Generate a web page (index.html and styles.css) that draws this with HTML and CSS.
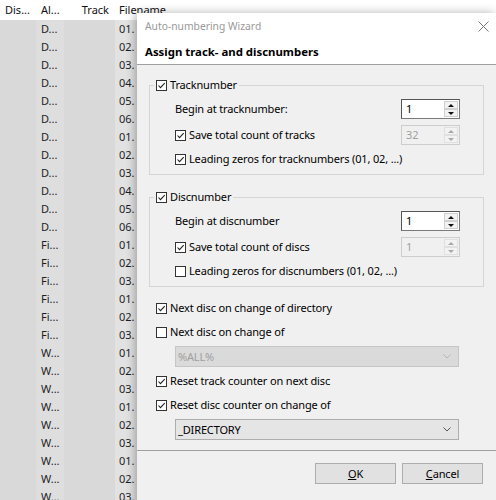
FILE: index.html
```html
<!DOCTYPE html>
<html lang="en">
<head>
    <meta charset="UTF-8">
    <meta name="viewport" content="width=device-width, initial-scale=1.0">
    <title>Auto-numbering Wizard</title>
    <link rel="stylesheet" href="styles.css">
</head>
<body>
    <div class="list">
        <div class="list-head">
            <span>Dis...</span>
            <span>Al...</span>
            <span class="num">Track</span>
            <span>Filename</span>
        </div>
        <div class="list-row"><span></span><span>D...</span><span></span><span>01.</span></div>
        <div class="list-row"><span></span><span>D...</span><span></span><span>02.</span></div>
        <div class="list-row"><span></span><span>D...</span><span></span><span>03.</span></div>
        <div class="list-row"><span></span><span>D...</span><span></span><span>04.</span></div>
        <div class="list-row"><span></span><span>D...</span><span></span><span>05.</span></div>
        <div class="list-row"><span></span><span>D...</span><span></span><span>06.</span></div>
        <div class="list-row"><span></span><span>D...</span><span></span><span>01.</span></div>
        <div class="list-row"><span></span><span>D...</span><span></span><span>02.</span></div>
        <div class="list-row"><span></span><span>D...</span><span></span><span>03.</span></div>
        <div class="list-row"><span></span><span>D...</span><span></span><span>04.</span></div>
        <div class="list-row"><span></span><span>D...</span><span></span><span>05.</span></div>
        <div class="list-row"><span></span><span>D...</span><span></span><span>06.</span></div>
        <div class="list-row"><span></span><span>Fi...</span><span></span><span>01.</span></div>
        <div class="list-row"><span></span><span>Fi...</span><span></span><span>02.</span></div>
        <div class="list-row"><span></span><span>Fi...</span><span></span><span>03.</span></div>
        <div class="list-row"><span></span><span>Fi...</span><span></span><span>01.</span></div>
        <div class="list-row"><span></span><span>Fi...</span><span></span><span>02.</span></div>
        <div class="list-row"><span></span><span>Fi...</span><span></span><span>03.</span></div>
        <div class="list-row"><span></span><span>W...</span><span></span><span>01.</span></div>
        <div class="list-row"><span></span><span>W...</span><span></span><span>02.</span></div>
        <div class="list-row"><span></span><span>W...</span><span></span><span>03.</span></div>
        <div class="list-row"><span></span><span>W...</span><span></span><span>01.</span></div>
        <div class="list-row"><span></span><span>W...</span><span></span><span>02.</span></div>
        <div class="list-row"><span></span><span>W...</span><span></span><span>03.</span></div>
        <div class="list-row"><span></span><span>W...</span><span></span><span>01.</span></div>
        <div class="list-row"><span></span><span>W...</span><span></span><span>02.</span></div>
        <div class="list-row"><span></span><span>W...</span><span></span><span>03.</span></div>
    </div>

    <div class="dialog">
        <div class="titlebar">
            <span>Auto-numbering Wizard</span>
            <svg class="close" viewBox="0 0 11 11"><path d="M0.5 0.5 L10.5 10.5 M10.5 0.5 L0.5 10.5"/></svg>
        </div>
        <div class="wizard-head">Assign track- and discnumbers</div>

        <div class="wizard-body">
            <fieldset class="group">
                <legend class="cb"><span class="box"><svg viewBox="0 0 9 9"><polyline points="1.5,4.5 3.5,6.7 7.7,2.2"/></svg></span>Tracknumber</legend>
                <div class="group-body">
                    <div class="field">
                        <span>Begin at tracknumber:</span>
                        <div class="spin">
                            <span class="spin-value">1</span>
                            <span class="spin-arrows"><i class="up"></i><i class="down"></i></span>
                        </div>
                    </div>
                    <div class="field">
                        <span class="cb"><span class="box"><svg viewBox="0 0 9 9"><polyline points="1.5,4.5 3.5,6.7 7.7,2.2"/></svg></span>Save total count of tracks</span>
                        <div class="spin disabled">
                            <span class="spin-value">32</span>
                            <span class="spin-arrows"><i class="up"></i><i class="down"></i></span>
                        </div>
                    </div>
                    <div class="line">
                        <span class="cb"><span class="box"><svg viewBox="0 0 9 9"><polyline points="1.5,4.5 3.5,6.7 7.7,2.2"/></svg></span>Leading zeros for tracknumbers (01, 02, ...)</span>
                    </div>
                </div>
            </fieldset>

            <fieldset class="group second">
                <legend class="cb"><span class="box"><svg viewBox="0 0 9 9"><polyline points="1.5,4.5 3.5,6.7 7.7,2.2"/></svg></span>Discnumber</legend>
                <div class="group-body">
                    <div class="field">
                        <span>Begin at discnumber</span>
                        <div class="spin">
                            <span class="spin-value">1</span>
                            <span class="spin-arrows"><i class="up"></i><i class="down"></i></span>
                        </div>
                    </div>
                    <div class="field">
                        <span class="cb"><span class="box"><svg viewBox="0 0 9 9"><polyline points="1.5,4.5 3.5,6.7 7.7,2.2"/></svg></span>Save total count of discs</span>
                        <div class="spin disabled">
                            <span class="spin-value">1</span>
                            <span class="spin-arrows"><i class="up"></i><i class="down"></i></span>
                        </div>
                    </div>
                    <div class="line">
                        <span class="cb"><span class="box"></span>Leading zeros for discnumbers (01, 02, ...)</span>
                    </div>
                </div>
            </fieldset>

            <div class="options">
                <div class="line"><span class="cb"><span class="box"><svg viewBox="0 0 9 9"><polyline points="1.5,4.5 3.5,6.7 7.7,2.2"/></svg></span>Next disc on change of directory</span></div>
                <div class="line"><span class="cb"><span class="box"></span>Next disc on change of</span></div>
                <div class="combo disabled">
                    <span>%ALL%</span>
                    <svg class="chevron" viewBox="0 0 8 5"><polyline points="0.5,0.5 4,4 7.5,0.5"/></svg>
                </div>
                <div class="line"><span class="cb"><span class="box"><svg viewBox="0 0 9 9"><polyline points="1.5,4.5 3.5,6.7 7.7,2.2"/></svg></span>Reset track counter on next disc</span></div>
                <div class="line"><span class="cb"><span class="box"><svg viewBox="0 0 9 9"><polyline points="1.5,4.5 3.5,6.7 7.7,2.2"/></svg></span>Reset disc counter on change of</span></div>
                <div class="combo">
                    <span>_DIRECTORY</span>
                    <svg class="chevron" viewBox="0 0 8 5"><polyline points="0.5,0.5 4,4 7.5,0.5"/></svg>
                </div>
            </div>
        </div>

        <div class="wizard-foot">
            <button class="btn"><u>O</u>K</button>
            <button class="btn"><u>C</u>ancel</button>
        </div>
    </div>
</body>
</html>
```

FILE: styles.css
```css
* {
    box-sizing: border-box;
}

body {
    margin: 0;
    width: 496px;
    height: 500px;
    overflow: hidden;
    position: relative;
    background: #fff;
    font-family: 'Noto Sans', 'Open Sans', sans-serif;
    font-size: 11px;
    line-height: 14px;
    color: #000;
}

/* track list behind the dialog */
.list-head,
.list-row {
    display: grid;
    grid-template-columns: 36px 28px 51px 1fr;
}

.list-head {
    height: 20px;
    align-items: center;
    color: #111;
}

.list-head span,
.list-row span {
    padding-left: 5px;
    white-space: nowrap;
}

.list-head .num {
    text-align: right;
    padding-right: 6px;
}

.list-row {
    height: 18px;
    color: #1e1e1e;
}

.list-row span {
    display: flex;
    align-items: center;
    background: #d9d9d9;
}

.list-row span:nth-child(2) {
    background: #dedede;
}

.list-head span:nth-child(4),
.list-row span:nth-child(4) {
    padding-left: 4px;
}

.list-row span:nth-child(4) {
    background: #e2e2e2;
}

/* dialog */
.dialog {
    position: absolute;
    left: 137px;
    top: 13px;
    width: 359px;
    height: 500px;
    background: #f0f0f0;
    box-shadow: -2px 0 9px rgba(0, 0, 0, 0.3);
    display: flex;
    flex-direction: column;
    letter-spacing: -0.15px;
}

.titlebar {
    height: 26px;
    background: #fff;
    display: flex;
    align-items: center;
    justify-content: space-between;
    padding: 0 7px 0 8px;
    color: #999;
    font-size: 10.3px;
    letter-spacing: 0;
}

.close {
    width: 11px;
    height: 11px;
    fill: none;
    stroke: #777;
    stroke-width: 1;
}

.wizard-head {
    height: 26px;
    background: #fff;
    border-bottom: 1px solid #a0a0a0;
    padding-left: 8px;
    display: flex;
    align-items: center;
    font-weight: 700;
    font-size: 11.4px;
    letter-spacing: 0;
}

.wizard-body {
    padding: 13px 12px 10px 12px;
    display: flex;
    flex-direction: column;
}

/* group boxes */
.group {
    margin: 0;
    padding: 0;
    min-width: 0;
    border: 1px solid #d5d5d5;
}

.group.second {
    margin-top: 15px;
}

.group legend {
    margin-left: 4px;
    padding: 0 2px;
    height: 14px;
}

.group-body {
    padding: 7px 23px 7px 25px;
    display: flex;
    flex-direction: column;
    gap: 6px;
}

.field {
    height: 20px;
    display: flex;
    align-items: center;
    justify-content: space-between;
}

.line {
    height: 16px;
    display: flex;
    align-items: center;
}

/* checkboxes */
.cb {
    display: flex;
    align-items: center;
    gap: 3px;
    white-space: nowrap;
}

.box {
    width: 11px;
    height: 11px;
    flex: none;
    border: 1px solid #333;
    background: #fff;
    display: flex;
}

.box svg {
    width: 9px;
    height: 9px;
    fill: none;
    stroke: #222;
    stroke-width: 1.1;
}

/* spin boxes */
.spin {
    width: 59px;
    height: 20px;
    display: flex;
    border: 1px solid #7a7a7a;
    border-top-color: #555;
    border-left-color: #555;
    background: #fff;
}

.spin-value {
    flex: 1;
    padding-left: 4px;
    display: flex;
    align-items: center;
}

.spin-arrows {
    width: 16px;
    padding: 1px;
    display: flex;
    flex-direction: column;
}

.spin-arrows i {
    flex: 1;
    border: 1px solid #d0d0d0;
    background: #f2f2f2;
    display: flex;
    align-items: center;
    justify-content: center;
}

.spin-arrows i::before {
    content: '';
    border-left: 3px solid transparent;
    border-right: 3px solid transparent;
}

.spin-arrows .up::before {
    border-bottom: 3px solid #111;
}

.spin-arrows .down::before {
    border-top: 3px solid #111;
}

.spin.disabled {
    border-color: #cdcdcd;
    background: #f0f0f0;
    color: #a0a0a0;
}

.spin.disabled .spin-arrows i {
    border-color: #e0e0e0;
}

.spin.disabled .up::before {
    border-bottom-color: #a8a8a8;
}

.spin.disabled .down::before {
    border-top-color: #a8a8a8;
}

/* loose options */
.options {
    margin-top: 11px;
    padding-left: 7px;
    display: flex;
    flex-direction: column;
    gap: 4px;
}

.options .line {
    height: 20px;
}

.combo {
    margin-left: 19px;
    width: 284px;
    height: 21px;
    border: 1px solid #adadad;
    background: #e5e5e5;
    display: flex;
    align-items: center;
    justify-content: space-between;
    padding: 0 7px 0 2px;
}

.combo.disabled {
    border-color: #c6c6c6;
    background: #dadada;
    color: #a0a0a0;
}

.chevron {
    width: 8px;
    height: 5px;
    fill: none;
    stroke: #555;
    stroke-width: 1;
}

.combo.disabled .chevron {
    stroke: #b5b5b5;
}

/* buttons */
.wizard-foot {
    border-top: 1px solid #a0a0a0;
    padding: 12px 13px 0 0;
    display: flex;
    justify-content: flex-end;
    gap: 6px;
}

.btn {
    width: 81px;
    height: 21px;
    border: 1px solid #adadad;
    background: #e1e1e1;
    font-family: inherit;
    font-size: 11px;
    letter-spacing: inherit;
    color: #000;
    padding: 0;
}
```
